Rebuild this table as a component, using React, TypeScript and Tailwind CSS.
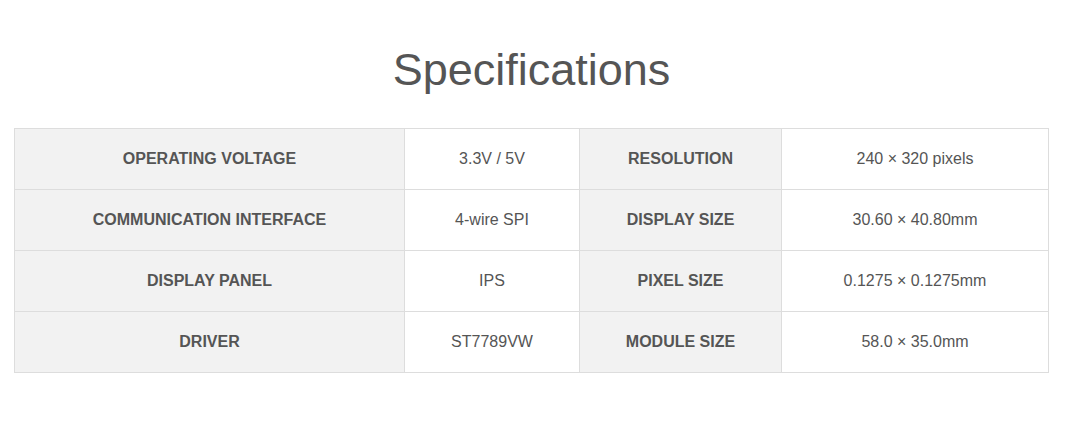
import React from "react";

const rows: [string, string, string, string][] = [
  ["OPERATING VOLTAGE", "3.3V / 5V", "RESOLUTION", "240 × 320 pixels"],
  ["COMMUNICATION INTERFACE", "4-wire SPI", "DISPLAY SIZE", "30.60 × 40.80mm"],
  ["DISPLAY PANEL", "IPS", "PIXEL SIZE", "0.1275 × 0.1275mm"],
  ["DRIVER", "ST7789VW", "MODULE SIZE", "58.0 × 35.0mm"],
];

export default function App() {
  return (
    <div
      className="w-[1068px] h-[437px] bg-white text-[#555]"
      style={{ fontFamily: '"Liberation Sans", Arial, sans-serif' }}
    >
      <div className="ml-[14px] w-[1035px]">
        <h1 className="pt-[40px] text-center text-[45px] leading-[60px] text-[#555] font-normal">
          Specifications
        </h1>
        <div className="mt-[28px] grid grid-cols-[390px_175px_202px_267px] border-t border-l border-[#ddd]">
          {rows.map((r, i) => (
            <React.Fragment key={i}>
              <div className="h-[61px] flex items-center justify-center bg-[#f2f2f2] border-r border-b border-[#ddd] font-bold text-[16px] text-[#555]">
                {r[0]}
              </div>
              <div className="h-[61px] flex items-center justify-center bg-white border-r border-b border-[#ddd] text-[16px] text-[#555]">
                {r[1]}
              </div>
              <div className="h-[61px] flex items-center justify-center bg-[#f2f2f2] border-r border-b border-[#ddd] font-bold text-[16px] text-[#555]">
                {r[2]}
              </div>
              <div className="h-[61px] flex items-center justify-center bg-white border-r border-b border-[#ddd] text-[16px] text-[#555]">
                {r[3]}
              </div>
            </React.Fragment>
          ))}
        </div>
      </div>
    </div>
  );
}
